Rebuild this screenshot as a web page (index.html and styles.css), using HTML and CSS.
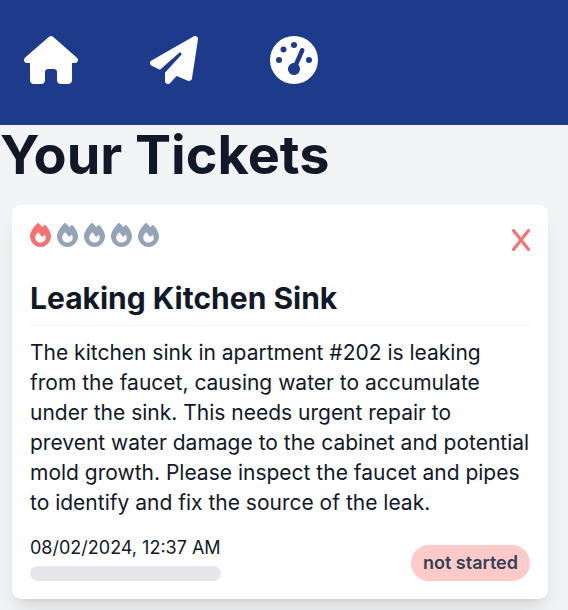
FILE: index.html
```html
<!DOCTYPE html>
<html lang="en">
<head>
<meta charset="utf-8">
<meta name="viewport" content="width=device-width, initial-scale=1">
<title>Your Tickets</title>
<link rel="stylesheet" href="styles.css">
</head>
<body>
<svg class="symbols" aria-hidden="true">
  <symbol id="fire" viewBox="0 0 448 512"><path d="M159.3 5.4c7.8-7.3 19.9-7.2 27.7 .1c27.6 25.9 53.5 53.8 77.7 84c11-14.4 23.5-30.1 37-42.9c7.9-7.4 20.1-7.4 28 .1c34.6 33 63.9 76.6 84.5 118c20.3 40.8 33.8 82.5 33.8 111.9C448 404.2 348.2 512 224 512C98.4 512 0 404.1 0 276.5c0-38.4 17.8-85.3 45.4-131.7C73.3 97.7 112.7 48.6 159.3 5.4zM225.7 416c25.3 0 47.7-7 68.8-21c42.1-29.4 53.4-88.2 28.1-134.4c-4.5-9-16-9.6-22.5-2l-25.2 29.3c-6.6 7.6-18.5 7.4-24.7-.5c-16.5-21-46-58.5-62.8-79.8c-6.3-8-18.3-8.1-24.7-.1c-33.8 42.5-50.8 69.3-50.8 99.4C112 375.4 162.6 416 225.7 416z"/></symbol>
</svg>
<nav class="nav" aria-label="Main">
  <a href="#home" aria-label="Home"><svg class="icon" viewBox="0 0 576 512"><path d="M575.8 255.5c0 18-15 32.1-32 32.1h-32l.7 160.2c0 2.7-.2 5.4-.5 8.1V472c0 22.1-17.9 40-40 40H456c-1.1 0-2.2 0-3.3-.1c-1.4 .1-2.8 .1-4.2 .1H416 392c-22.1 0-40-17.9-40-40V448 384c0-17.7-14.3-32-32-32H256c-17.7 0-32 14.3-32 32v64 24c0 22.1-17.9 40-40 40H160 128.1c-1.5 0-3-.1-4.5-.2c-1.2 .1-2.4 .2-3.6 .2H104c-22.1 0-40-17.9-40-40V360c0-.9 0-1.9 .1-2.8V287.6H32c-18 0-32-14-32-32.1c0-9 3-17 10-24L266.4 8c7-7 15-8 22-8s15 2 21 7L564.8 231.5c8 7 12 15 11 24z"/></svg></a>
  <a href="#new-ticket" aria-label="New ticket"><svg class="icon" viewBox="0 0 512 512"><path d="M498.1 5.6c10.1 7 15.4 19.1 13.5 31.2l-64 416c-1.5 9.7-7.4 18.2-16 23s-18.9 5.4-28 1.6L284 427.7l-68.5 74.1c-8.9 9.7-22.9 12.9-35.2 8.1S160 493.2 160 480V396.4c0-4 1.5-7.8 4.2-10.7L331.8 202.8c5.8-6.3 5.6-16-.4-22s-15.7-6.4-22-.7L106 360.8 17.7 316.6C7.1 311.3 .3 300.7 0 288.9s5.9-22.8 16.1-28.7l448-256c10.7-6.1 23.9-5.5 34 1.4z"/></svg></a>
  <a href="#dashboard" aria-label="Dashboard"><svg class="icon" viewBox="0 0 512 512"><path d="M0 256a256 256 0 1 1 512 0A256 256 0 1 1 0 256zM288 96a32 32 0 1 0 -64 0 32 32 0 1 0 64 0zM256 416c35.3 0 64-28.7 64-64c0-17.4-6.9-33.1-18.1-44.6L366 161.7c5.3-12.1-.2-26.3-12.3-31.6s-26.3 .2-31.6 12.3L257.9 288c-.6 0-1.3 0-1.9 0c-35.3 0-64 28.7-64 64s28.7 64 64 64zM176 144a32 32 0 1 0 -64 0 32 32 0 1 0 64 0zM96 288a32 32 0 1 0 0-64 32 32 0 1 0 0 64zm352-32a32 32 0 1 0 -64 0 32 32 0 1 0 64 0z"/></svg></a>
</nav>
<main>
  <h1 class="page-title">Your Tickets</h1>
  <article class="card">
    <div class="card-top">
      <div class="priority" role="img" aria-label="Priority 1 of 5">
        <svg class="flame flame-on"><use href="#fire"/></svg>
        <svg class="flame"><use href="#fire"/></svg>
        <svg class="flame"><use href="#fire"/></svg>
        <svg class="flame"><use href="#fire"/></svg>
        <svg class="flame"><use href="#fire"/></svg>
      </div>
      <button class="delete" type="button" aria-label="Delete ticket"><svg class="cross" viewBox="0 0 18 24"><path d="M1.5 2.5L16.5 21.5M16.5 2.5L1.5 21.5"/></svg></button>
    </div>
    <h2 class="card-title">Leaking Kitchen Sink</h2>
    <p class="description">The kitchen sink in apartment #202 is leaking from the faucet, causing water to accumulate under the sink. This needs urgent repair to prevent water damage to the cabinet and potential mold growth. Please inspect the faucet and pipes to identify and fix the source of the leak.</p>
    <div class="card-bottom">
      <div class="meta">
        <time class="date" datetime="2024-08-02T00:37">08/02/2024, 12:37 AM</time>
        <div class="progress" role="progressbar" aria-label="Progress" aria-valuenow="0" aria-valuemin="0" aria-valuemax="100"></div>
      </div>
      <span class="status">not started</span>
    </div>
  </article>
</main>
</body>
</html>
```
FILE: styles.css
```css
* {
  box-sizing: border-box;
}

body {
  margin: 0;
  background: #f3f4f6;
  color: #111827;
  font-family: Inter, "Liberation Sans", sans-serif;
}

h1, h2, p {
  margin: 0;
}

.symbols {
  display: none;
}

.nav {
  display: flex;
  gap: 72px;
  padding: 36px 24px 41px;
  background: #1e3a8a;
}

.nav a {
  display: block;
  color: #fff;
}

.icon {
  display: block;
  height: 48px;
  fill: currentColor;
}

.page-title {
  font-size: 54px;
  line-height: 60px;
  font-weight: 700;
}

.card {
  margin: 20px 20px 12px 12px;
  padding: 18px;
  border-radius: 9px;
  background: #fff;
  box-shadow: 0 15px 22px -4px rgb(0 0 0 / 10%), 0 6px 9px -6px rgb(0 0 0 / 10%);
}

.card-top {
  display: flex;
  justify-content: space-between;
  margin-bottom: 28px;
}

.priority {
  display: flex;
  gap: 6px;
}

.flame {
  width: 21px;
  height: 24px;
  fill: #94a3b8;
}

.flame-on {
  fill: #f87171;
}

.delete {
  margin: 5px 0 0;
  padding: 0;
  border: 0;
  background: none;
  color: #f87171;
  cursor: pointer;
}

.cross {
  display: block;
  width: 18px;
  height: 24px;
  fill: none;
  stroke: currentColor;
  stroke-width: 3;
  stroke-linecap: round;
}

.card-title {
  padding-bottom: 9px;
  border-bottom: 1px solid #f3f4f6;
  font-size: 30px;
  line-height: 36px;
  font-weight: 700;
}

.description {
  padding: 12px 0 18px;
  font-size: 21px;
  line-height: 30px;
}

.card-bottom {
  display: flex;
  justify-content: space-between;
  align-items: flex-end;
}

.meta {
  display: grid;
  gap: 6px;
}

.date {
  font-size: 18px;
  line-height: 24px;
}

.progress {
  height: 15px;
  border-radius: 8px;
  background: #e5e7eb;
}

.status {
  padding: 6px 12px;
  border-radius: 18px;
  background: #fecaca;
  color: #334155;
  font-size: 18px;
  line-height: 24px;
  font-weight: 600;
}
```
